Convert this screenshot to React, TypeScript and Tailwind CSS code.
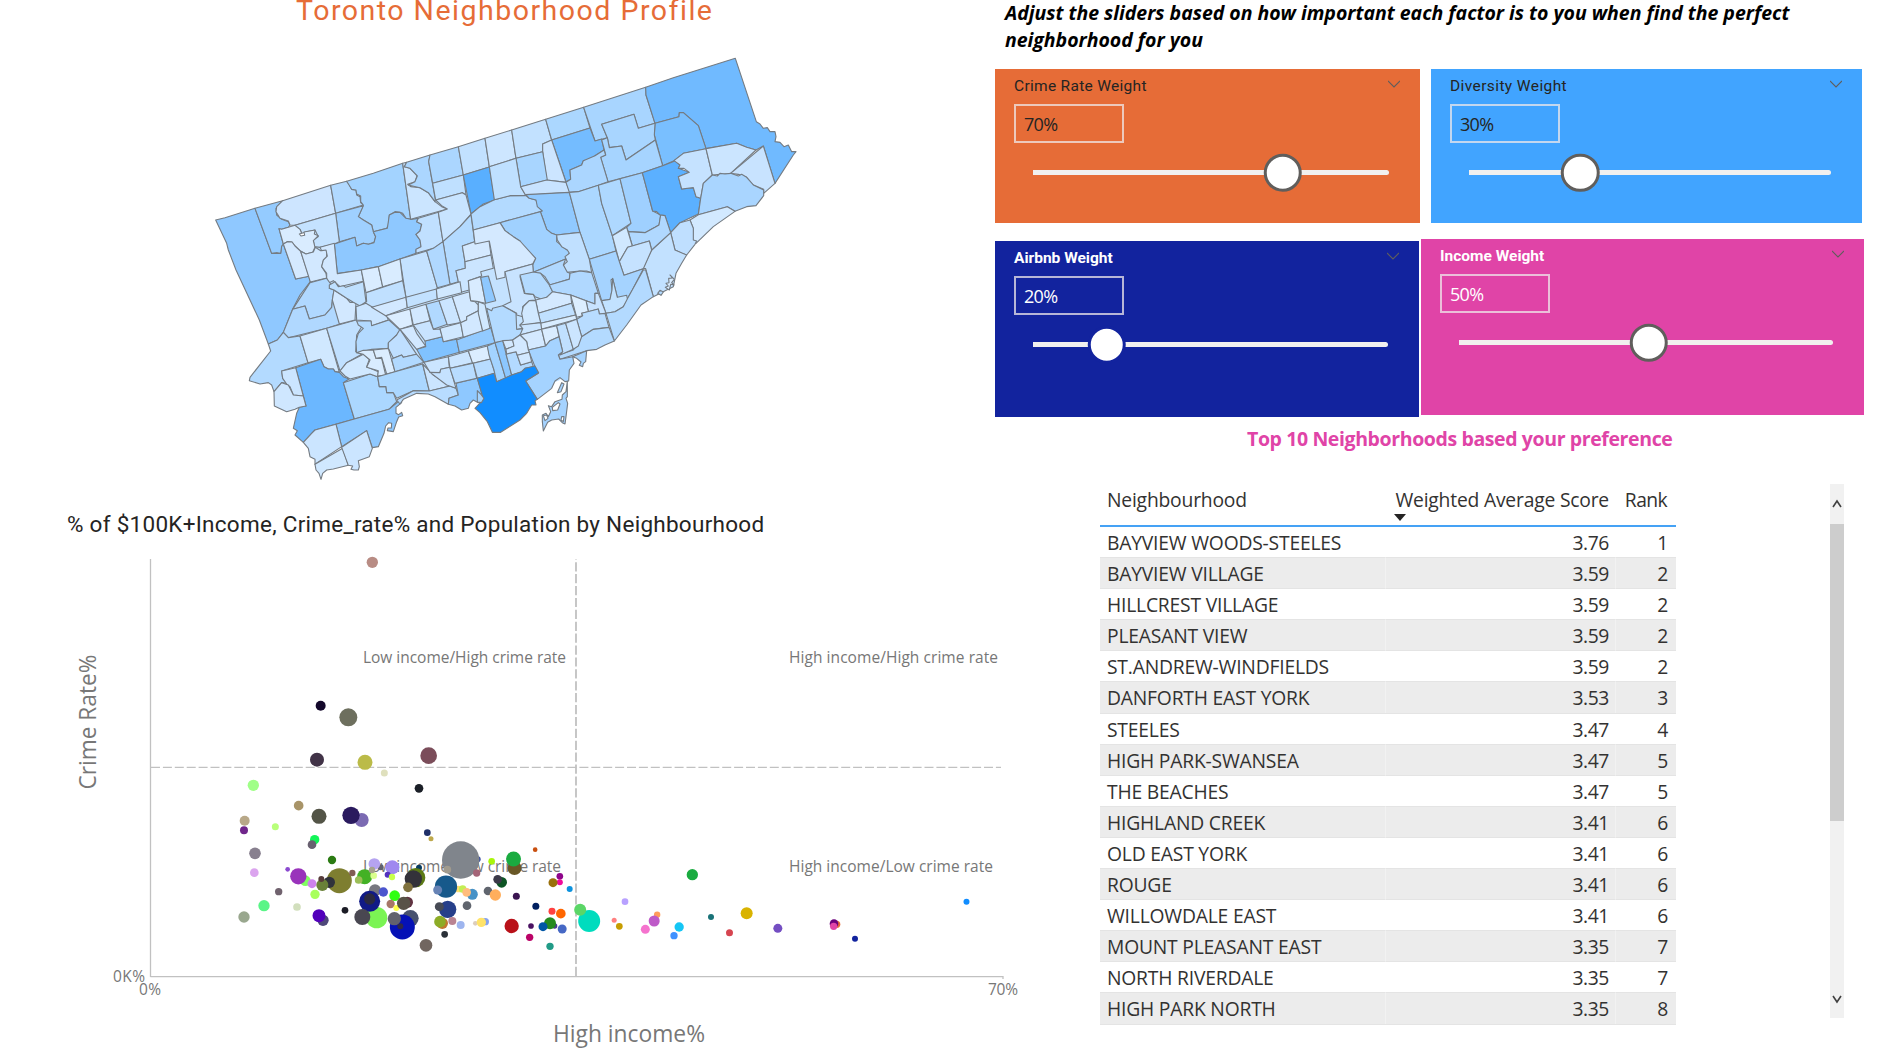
import React from "react";

const W = "font-['Open_Sans','Noto_Sans',sans-serif]";
const DIN = "font-['Roboto','Liberation_Sans',sans-serif]";

type Area = [string, string];

const northWest: Area[] = [
  ["#8fc8ff", "47,540 75,533 165,505 215,640 242,640 245,618 250,612 287,717 327,709 331,725 300,765 278,807 250,877 232,900 205,912 178,840 108,690 85,630 80,610"],
  ["#94cbff", "165,505 248,482 228,505 230,525 245,538 265,545 270,555 265,562 245,568 237,566 250,612 245,618 242,640 232,638 215,640"],
  ["#cde5ff", "248,482 392,436 407,520 285,556 270,555 265,543 240,535 228,515 230,500"],
  ["#b1d9ff", "392,436 440,424 447,432 455,448 468,450 470,465 480,470 482,488 490,495 407,520"],
  ["#a3d3ff", "440,424 520,400 608,370 632,538 618,535 608,520 600,517 585,515 568,525 565,555 560,565 520,575 515,555 490,540 475,530 490,495 482,485 482,468 470,462 468,450 455,448"],
  ["#9fd0ff", "407,520 490,497 475,530 490,540 515,555 520,575 527,590 522,607 505,613 490,610 470,618 465,592 418,605"],
  ["#8ec8ff", "403,612 465,592 470,618 490,610 505,613 522,608 527,590 520,575 562,565 568,525 585,517 600,517 618,535 632,538 655,535 650,545 665,553 660,573 648,583 660,600 663,620 648,630 648,640 600,657 535,680 484,690 412,701"],
  ["#c4e2ff", "285,556 407,520 418,605 403,612 360,622 343,620 340,600 355,590 345,570 320,575 305,580 300,568"],
  ["#d9ecff", "237,566 245,568 270,560 285,556 300,568 305,580 298,582 303,588 314,586 312,576 345,570 343,582 355,587 340,602 345,622 338,637 318,642 300,632 285,618 276,606 262,605 250,612"],
  ["#d4e9ff", "250,612 262,605 276,606 285,618 302,634 327,709 287,717"],
  ["#d2e8ff", "302,634 318,642 340,636 346,622 362,632 380,628 380,655 370,662 365,680 378,700 380,714 331,726"],
  ["#d2e8ff", "360,622 403,610 412,701 484,690 490,724 440,735 420,740 400,722 380,732 380,700 365,680 370,660 382,648 378,630 365,632"],
  ["#cbe5ff", "608,370 620,367 613,380 630,385 652,405 645,425 623,433 632,440 660,443 685,458 705,485 725,500 742,507 632,538"],
  ["#abd6ff", "620,367 690,345 686,365 706,478 705,485 685,458 660,443 625,435 645,425 652,408 630,385 613,380"],
  ["#abd6ff", "690,345 775,320 790,405 698,430 686,365"],
  ["#c2e1ff", "775,320 855,295 868,381 790,405"],
  ["#bfe0ff", "698,430 790,405 798,465 787,458 707,480"],
  ["#59afff", "790,405 868,381 884,480 850,492 813,522"],
  ["#c0e0ff", "655,535 715,517 729,605 700,625 648,640 648,628 663,620 660,600 648,583 660,573 665,553 650,545"],
  ["#c8e4ff", "715,517 742,507 725,497 707,480 787,458 798,465 813,522 780,560 729,605"],
  ["#b3daff", "729,605 780,560 813,524 824,605 787,618 795,665 796,685 768,692 775,725 750,733"],
  ["#c4e2ff", "600,657 680,633 712,743 709,750 618,773"],
  ["#b0d8ff", "680,633 700,625 729,605 750,733 712,743"],
  ["#d9ecff", "484,690 535,680 548,740 498,758"],
  ["#d9ecff", "535,680 600,657 608,722 548,740"],
  ["#c0e0ff", "498,758 608,722 618,773 515,803 485,795 500,785"],
  ["#d4e9ff", "787,618 824,605 867,602 873,645 795,665"],
  ["#cbe5ff", "795,665 873,645 880,685 842,695 845,708 805,722 808,750 783,757 775,725 768,692 796,685"],
];

const northEast: Area[] = [
  ["#b3daff", "-27,522 0,500 43,479 90,467 137,466 148,475 168,480 175,500 187,513 60,548 -20,570"],
  ["#cde6ff", "15,295 95,270 108,355 28,380"],
  ["#c2e1ff", "95,270 197,238 215,300 188,312 188,335 108,355"],
  ["#abd7ff", "197,238 311,202 330,264 215,300"],
  ["#a8d5ff", "311,202 497,142 498,165 525,250 475,265 462,223 365,253 382,293 345,303"],
  ["#70baff", "497,142 580,113 766,55 829,245 840,252 850,265 862,263 870,275 885,275 888,290 885,305 900,307 912,320 925,315 935,335 948,335 940,345 885,430 850,318 828,330 800,322 770,310 678,326 655,257 610,218 598,218 597,230 525,250 498,165"],
  ["#79bfff", "525,250 597,230 598,218 610,218 655,257 678,326 610,340 582,362 548,377 523,285"],
  ["#74bcff", "215,300 330,264 345,303 365,297 372,330 345,347 330,360 310,362 305,375 270,390 272,418 258,425"],
  ["#cce5ff", "188,312 215,300 258,427 200,420 188,335"],
  ["#a8d5ff", "108,355 188,335 202,420 122,440"],
  ["#bfe0ff", "28,380 108,355 122,440 137,466 90,467 43,479"],
  ["#c8e3ff", "122,440 200,420 258,427 270,457 137,466"],
  ["#a8d5ff", "365,253 462,223 475,265 525,250 523,285 526,300 438,360 425,318 388,323 382,293"],
  ["#a6d4ff", "382,293 388,323 425,318 438,360 526,300 548,377 487,398 384,425 362,352 377,345 372,325 365,300"],
  ["#abd6ff", "258,427 272,418 270,390 305,375 310,362 345,347 372,330 377,345 362,352 384,425 355,436 295,455 268,457"],
  ["#90c9ff", "137,464 268,457 300,577 230,585 215,580 200,568 190,540 181,515 187,513 172,500 168,480 148,475"],
  ["#a0d1ff", "60,548 181,515 190,540 200,568 215,580 230,585 230,605 262,630 270,635 257,657 160,697 158,675 167,655 135,625 120,603 100,590 75,572"],
  ["#d4e9ff", "-20,570 60,548 75,572 100,590 120,603 167,655 158,672 75,695 75,712 50,718 28,603 -15,612"],
  ["#abd7ff", "268,457 295,455 355,436 365,490 397,587 408,633 328,658 300,577"],
  ["#aed8ff", "355,436 420,416 453,550 397,587 365,490"],
  ["#9fd0ff", "420,416 487,398 518,513 542,525 537,555 525,562 495,578 445,575 440,562 453,550"],
  ["#5bb0ff", "487,398 548,377 587,362 600,375 595,385 628,397 595,410 605,447 640,443 648,470 662,475 655,522 600,548 572,578 555,527 540,525 530,515 518,513"],
  ["#c5e2ff", "582,362 610,340 678,326 697,405 670,430 662,475 648,470 640,443 605,447 595,410 628,397 612,385 595,385 600,375"],
  ["#cbe5ff", "678,326 770,310 800,322 828,330 752,400 697,405"],
  ["#c8e3ff", "752,400 850,318 885,430 851,460 851,448 820,435 800,412 775,403"],
  ["#a9d5ff", "697,405 712,408 720,400 735,402 752,400 775,408 785,403 800,412 820,435 851,450 851,467 828,497 800,500 765,514 742,500 655,524 662,475 670,430"],
  ["#d2e9ff", "742,500 765,514 700,560 648,610 638,600 640,565 630,540 655,524"],
  ["#bfdfff", "572,578 600,548 630,540 640,565 640,600 650,603 645,613 620,645 605,640 585,630"],
  ["#c2e1ff", "515,630 572,578 585,630 620,645 605,670 588,700 580,740 560,750 520,770 497,686 488,686"],
  ["#b0d8ff", "445,575 495,578 525,562 537,555 542,525 555,527 572,578 515,630 508,603 457,618"],
  ["#d0e8ff", "397,587 440,562 457,618 443,622 418,665"],
  ["#c5e2ff", "418,665 443,622 508,603 515,630 490,686 432,706"],
  ["#a5d3ff", "328,658 408,633 418,665 432,706 490,686 457,750 443,775 412,772 398,716 393,720 396,750 390,780 365,782"],
  ["#c0e0ff", "230,585 300,577 328,658 335,698 320,693 300,693 260,697 250,675 262,665 255,650 268,640 262,630 245,620 232,600"],
  ["#b0d8ff", "160,697 257,657 250,675 262,697 270,700 268,717 210,735 195,710 182,700"],
  ["#c8e3ff", "75,695 158,672 160,697 120,710 133,760 160,763 167,780 148,782 128,800 128,830 110,825 110,820 68,797 93,785"],
];

const southWest: Area[] = [
  ["#b0d8ff", "330,38 380,25 392,42 388,55 402,60 397,90 395,112 375,135 328,147 315,108 278,118"],
  ["#b0d8ff", "278,118 315,108 328,147 375,135 395,112 398,85 420,162 380,175 265,203 250,187"],
  ["#b3daff", "205,222 232,210 250,187 265,203 300,198 324,278 245,303 248,325 262,340 245,338 222,365 215,345 205,338 180,342 148,332 150,322 212,243"],
  ["#d0e8ff", "300,198 380,175 418,307 405,305 400,297 385,297 372,290 362,268 324,278"],
  ["#c0e0ff", "380,175 468,150 485,170 470,195 467,245 485,253 440,278 420,303"],
  ["#d2e8ff", "402,60 440,85 450,97 468,97 465,150 418,162 397,90"],
  ["#bfe0ff", "388,45 405,35 415,50 430,47 437,52 490,35 498,95 480,108 460,97 440,85 402,60 388,55"],
  ["#cbe5ff", "468,110 498,100 560,137 565,150 515,167 513,153 470,150"],
  ["#b3daff", "470,153 513,153 515,167 567,150 600,180 590,195 565,220 565,235 515,238 470,248 468,215 475,190 490,175 475,165"],
  ["#bfdfff", "600,178 650,253 610,262 605,255 580,265 565,235 565,218 590,195"],
  ["#6bb7ff", "287,293 362,268 372,290 385,297 400,297 405,305 418,307 430,320 447,327 430,338 463,447 345,480 335,490 310,517 285,495 292,482 280,475 290,430 298,412 318,408"],
  ["#cbe5ff", "245,303 287,293 310,378 280,375 270,350 262,345 248,325"],
  ["#cfe7ff", "222,365 245,338 265,345 270,355 280,375 310,378 318,408 298,412 285,418 260,425 223,408"],
  ["#abd7ff", "430,338 510,312 533,320 538,350 558,350 560,368 580,368 590,395 567,418 463,447"],
  ["#8ec8ff", "408,463 463,447 567,418 600,390 605,398 588,412 588,430 596,434 605,427 608,437 596,441 590,455 580,485 562,482 564,474 574,474 575,460 566,458 557,468 552,490 535,530 517,533 500,482 425,530"],
  ["#cbe5ff", "345,480 408,463 425,530 345,583 345,568 330,560 325,535 310,517 335,490"],
  ["#d0e8ff", "345,583 428,535 445,586 400,597 380,600 368,610 363,628 357,610 348,600"],
  ["#cbe5ff", "425,532 500,482 517,535 508,560 475,572 478,590 475,600 462,600 453,598 458,588 445,586"],
  ["#d0e8ff", "420,303 440,278 490,253 508,268 500,290 535,305 533,320 510,312 450,327 435,318"],
  ["#d9ecff", "470,248 490,241 520,240 528,265 545,265 557,315 533,318 535,302 500,292 510,270 490,253"],
  ["#dbedff", "520,240 565,235 585,305 560,312 545,262 528,265"],
  ["#b1d9ff", "580,265 605,255 610,262 650,253 672,277 585,305 575,268"],
  ["#abd7ff", "533,320 585,305 668,282 688,363 640,362 590,385 580,368 560,368 558,350 538,350"],
  ["#cbe5ff", "668,282 700,315 750,348 688,363"],
  ["#b8dcff", "590,390 640,362 688,363 750,348 768,355 775,375 747,385 745,403 705,380 685,372 650,370 610,388 600,402"],
  ["#8ec8ff", "768,340 832,325 850,385 835,398 820,390 810,400 805,415 785,420 765,408 745,403 747,385 775,375"],
  ["#80c2ff", "650,238 677,230 675,213 727,200 730,215 770,208 778,247 672,277"],
  ["#92caff", "770,210 872,172 885,218 778,247"],
  ["#d2e8ff", "515,112 618,82 622,113 557,137"],
  ["#dbedff", "557,137 630,117 638,165 600,178"],
  ["#c2e1ff", "618,82 709,57 712,87 622,113"],
  ["#d2e8ff", "630,117 678,103 690,152 640,165"],
  ["#b1d9ff", "678,103 717,92 742,163 700,178"],
  ["#cbe5ff", "717,92 757,80 782,158 742,165"],
  ["#d2e8ff", "757,80 808,65 812,92 825,95 835,105 835,122 800,140 800,150 782,158"],
  ["#d0e8ff", "709,57 780,35 785,68 712,87"],
  ["#c8e3ff", "640,165 690,152 700,178 720,177 727,200 675,213"],
  ["#d2e8ff", "600,178 640,167 650,190 677,228 650,238"],
  ["#d0e8ff", "720,175 782,158 790,200 730,215"],
  ["#d2e8ff", "782,158 800,150 800,140 835,122 848,182 790,202"],
  ["#d8ebff", "805,32 842,20 857,100 835,95 812,92 808,65"],
  ["#8ec8ff", "842,22 865,18 887,92 857,100"],
  ["#d0e8ff", "835,95 855,103 870,175 848,183 835,130"],
  ["#cbe5ff", "672,277 745,260 748,292 722,298 720,308 690,307"],
  ["#cbe5ff", "745,260 805,243 818,278 750,295"],
  ["#dbedff", "805,243 862,228 872,267 818,280"],
  ["#c5e2ff", "690,307 720,308 722,298 750,292 768,355 740,345"],
  ["#b8dcff", "750,295 820,280 830,325 765,340"],
  ["#b8dcff", "820,280 872,267 885,310 832,325"],
];

const southEast: Area[] = [
  ["#b3daff", "120,15 160,6 182,10 208,45 218,65 200,82 185,88 165,80 160,73 135,70"],
  ["#b0d8ff", "208,45 268,28 270,10 300,3 335,8 355,70 345,70 345,102 272,75 218,65"],
  ["#c2e2ff", "365,92 390,88 396,60 398,25 412,82 440,76 443,90 430,110 405,125 378,130"],
  ["#b3daff", "443,85 490,0 497,0 520,80 483,105 440,165 403,213 378,130 405,125 430,110"],
  ["#c8e3ff", "318,92 345,102 345,70 355,70 378,130 358,132 355,117 325,125"],
  ["#dceeff", "272,75 318,92 325,125 305,130 308,137 290,142"],
  ["#b8dcff", "290,148 308,137 305,130 355,117 358,132 375,130 387,172 340,178 305,200"],
  ["#b3daff", "305,200 340,178 387,172 403,213 375,225 350,238 320,242 240,268 235,255 280,240"],
  ["#d4e9ff", "167,90 200,82 218,65 272,75 275,100 175,130"],
  ["#c0e0ff", "175,130 275,100 287,135 182,160"],
  ["#d8ecff", "182,160 287,135 290,148 183,178"],
  ["#d0e8ff", "120,165 130,155 125,130 130,110 148,92 167,92 175,130 182,158 120,168"],
  ["#cbe5ff", "120,165 182,158 185,178 120,195 115,178 128,176"],
  ["#b3daff", "20,115 35,122 38,115 68,107 108,130 110,178 128,176 120,195 98,210 45,218"],
  ["#d4e9ff", "120,195 185,178 197,228 145,240 140,215"],
  ["#d9ecff", "185,178 230,167 237,200 210,212 197,228"],
  ["#c0e0ff", "230,167 257,160 280,238 240,255 248,245"],
  ["#cbe5ff", "257,160 290,148 305,200 295,228 280,238"],
  ["#a5d3ff", "145,240 197,228 210,212 237,200 248,245 235,255 240,268 278,260 282,280 268,300 266,333 255,335 240,323 225,333 215,355 172,388 137,333 175,310 165,290"],
  ["#a3d3ff", "22,228 45,218 77,325 50,335 42,300 27,255"],
  ["#8cc7ff", "45,218 68,212 95,315 77,325"],
  ["#d2e8ff", "68,212 98,210 102,228 78,238"],
  ["#b3daff", "78,252 108,245 122,285 155,275 160,290 135,295 125,305 95,315"],
  ["#d2e8ff", "78,238 102,228 98,210 120,195 140,215 145,240 148,247 112,256 108,245 80,252"],
  ["#d2e8ff", "112,256 148,247 155,275 122,285"],
  ["#118dff", "-8,325 42,310 50,335 95,315 125,305 135,295 165,288 176,308 137,333 172,388 165,392 168,405 155,405 140,430 120,450 62,487 37,487 22,455 0,428 -15,415 10,388"],
  ["#a3d3ff", "-8,362 2,372 12,385 4,398 -8,396"],
  ["#a5d3ff", "278,260 320,242 317,275 310,280 308,290 298,286 303,276 290,265"],
  ["#a5d3ff", "262,333 262,380 258,385 263,400 258,440 255,462 247,458 236,447 215,450 203,457 190,483 187,455 187,435 198,430 205,440 212,425 205,407 215,410 225,395 246,388 247,375 258,365"],
  ["#ffffff", "217,412 235,398 240,402 233,420 218,422"],
  ["#ffffff", "190,437 200,435 204,445 195,452"],
  ["#ffffff", "245,440 252,440 250,455 243,450"],
  ["#a5d3ff", "245,338 252,342 243,365 232,368"],
  ["#d9ecff", "565,48 558,40 567,38 566,25 577,24 570,15 583,28 575,38 582,45 572,43 568,60 556,52"],
  ["#b3daff", "533,70 540,61 550,66 543,76"],
];

const quadrants: { at: string; areas: Area[] }[] = [
  { at: "translate(200 40) scale(0.33333)", areas: northWest },
  { at: "translate(480 40) scale(0.33333)", areas: northEast },
  { at: "translate(200 270) scale(0.33333)", areas: southWest },
  { at: "translate(480 270) scale(0.33333)", areas: southEast },
];

function TorontoMap() {
  return (
    <svg viewBox="200 40 610 450" className="ml-[200px] block h-[450px] w-[610px] shrink-0">
      <path fill="#c4e2ff" d="M290 250L330 220L420 190L500 170L600 240L620 290L600 320L560 380L510 400L480 380L400 380L310 390L290 350Z" />
      {quadrants.map((q) => (
        <g key={q.at} transform={q.at} stroke="#747b82" strokeWidth={3.3} strokeLinejoin="round">
          {q.areas.map(([fill, points], i) => (
            <polygon key={i} fill={fill} points={points} />
          ))}
        </g>
      ))}
    </svg>
  );
}

type Dot = [number, number, number, string];

const upperDots: Dot[] = [
  [967, 217, 17, "#b88c84"], [812, 647, 15, "#13082b"], [895, 682, 27, "#6d6f5e"], [801, 809, 21, "#413347"],
  [945, 817, 22.5, "#bbbb48"], [1136, 797, 25, "#7b4d5a"], [1003, 849, 10.5, "#dfe0bd"], [1107, 895, 13, "#1b1f27"],
];

const leftDots: Dot[] = [
  [100, 16, 17, "#a0ff88"], [236, 77, 14.5, "#a89468"], [297, 109, 22.5, "#535447"], [425, 120, 21, "#7b6ab2"], [393, 106, 26, "#2a1a5e"],
  [74, 122, 15, "#b8a888"], [72, 151, 12, "#70268b"], [166, 140, 10.5, "#b8ff7a"], [284, 179, 14, "#12f558"], [276, 194, 13, "#686070"],
  [105, 220, 17.5, "#88808f"], [336, 240, 12.5, "#2b7b13"], [622, 158, 10, "#1f2f68"], [633, 176, 7.5, "#bea84c"], [103, 278, 13, "#dba4ee"],
  [203, 268, 7, "#8b4ad0"], [256, 302, 16, "#80ff60"], [235, 289, 24.5, "#9933bb"], [276, 311, 13.5, "#ce82ed"], [358, 302, 37.5, "#7e7e30"],
  [328, 307, 17, "#30323b"], [307, 315, 18, "#698038"], [304, 297, 9, "#573c3b"], [397, 279, 9.5, "#815c53"], [176, 335, 11, "#70626e"],
  [285, 343, 14, "#a8ff5c"], [132, 377, 17, "#5af587"], [231, 381, 11.5, "#d2dfbd"], [72, 411, 17, "#99a78e"], [309, 421, 17, "#4e4779"],
  [297, 407, 19.5, "#5200bb"], [375, 391, 10, "#1b1c25"], [482, 262, 9, "#60606e"], [463, 252, 17.5, "#b5a3f0"], [434, 290, 22.5, "#43b125"],
  [461, 287, 10, "#d9ff8d"], [456, 270, 9.5, "#a6a38d"], [416, 300, 11.5, "#9bbe57"], [517, 262, 21, "#9f88ef"], [503, 284, 9, "#5231bd"],
  [516, 291, 9.5, "#c7ff4d"], [597, 263, 9, "#073b60"], [587, 293, 29, "#5c7a16"], [580, 297, 26, "#33323a"], [564, 322, 14.5, "#80723e"],
  [465, 331, 18, "#77777f"], [490, 336, 14, "#4b55ce"], [458, 389, 19, "#45218b"], [470, 413, 32, "#7bf454"], [449, 364, 31.5, "#111a86"],
  [449, 357, 17, "#2b2a40"], [427, 411, 24, "#494751"], [524, 347, 16, "#30ff12"], [512, 372, 12.5, "#a77768"], [529, 384, 9, "#ffff4c"],
  [562, 367, 17, "#613241"], [551, 370, 20, "#585247"], [571, 415, 25, "#48526f"], [547, 441, 37.5, "#0511b6"], [523, 416, 20, "#62616d"], [541, 439, 9, "#302849"],
  [618, 496, 19, "#716660"], [773, 238, 9, "#3b50a0"], [722, 240, 56, "#80858c"], [682, 269, 11.5, "#a19b8e"], [770, 279, 11, "#a46477"],
  [815, 244, 10, "#a9f60b"], [715, 327, 10, "#ffde72"], [678, 320, 33.5, "#17598b"], [653, 330, 13.5, "#6783b5"], [728, 327, 11.5, "#c3ee54"],
  [757, 343, 16.5, "#4792c7"], [740, 337, 13, "#ffbd7e"], [845, 307, 16, "#0d5424"], [833, 298, 13, "#3b3949"], [804, 333, 13, "#60656e"],
  [826, 345, 17, "#ffae5c"], [889, 349, 10.5, "#3b1551"], [741, 377, 13, "#60656e"], [683, 388, 26, "#263f8a"], [658, 380, 13.5, "#474b55"],
  [667, 430, 17, "#c07830"], [660, 425, 17.5, "#8dac27"], [697, 423, 12, "#b98392"], [722, 435, 12, "#9eb5ef"], [766, 430, 7, "#dccdbd"],
  [796, 425, 11, "#87a4ef"], [784, 427, 14, "#ffe36a"], [674, 463, 10, "#2a3038"], [875, 438, 21.5, "#b91119"],
];

const rightDots: Dot[] = [
  [43.6, 264, 21, "#695726"], [40.6, 237, 22.5, "#1aab40"], [105.5, 209, 7, "#c94f0f"], [179.5, 289, 10, "#8e058b"], [179.5, 307, 9, "#f00a9b"],
  [159, 308, 13.5, "#99700a"], [209, 327, 9, "#0b92de"], [577, 284, 17, "#1aab40"], [375, 365, 10, "#b8a1ff"], [107.5, 379, 10.5, "#002060"],
  [156, 394, 10.5, "#ff4141"], [182.5, 401, 14.5, "#ff6600"], [93, 438, 8.5, "#4a1162"], [164, 438, 8, "#4a3a92"], [150, 430, 18, "#258a1f"],
  [129, 440, 13.5, "#0056a5"], [186.5, 447, 13.5, "#4668c5"], [89, 472, 11, "#bb0367"], [150, 499, 11, "#219b87"], [267.5, 423, 33, "#00dcbe"],
  [240.5, 389, 18, "#5bd667"], [342.5, 421, 7.5, "#ff8080"], [358, 439, 10, "#c79d00"], [471.5, 404, 9.5, "#ff9d5c"], [462.5, 423, 16.5, "#be5ac8"],
  [436, 448, 13.5, "#f573ce"], [537.5, 441, 14, "#15c6f5"], [522, 467, 11, "#4092ff"], [633, 411, 9, "#197278"], [688.5, 458, 10.5, "#d64550"],
  [740, 400, 18, "#d9b300"], [833.5, 445, 13.5, "#744ec2"], [1010, 433, 11, "#e66c37"], [1002, 431, 13, "#6b007b"], [1001, 439, 11, "#e044a7"],
  [1065, 476, 9, "#12239e"], [1399.5, 365, 9, "#118dff"],
];

function Dots({ at, items }: { at: string; items: Dot[] }) {
  return (
    <g transform={at}>
      {items.map(([x, y, r, c], i) => (
        <circle key={i} cx={x} cy={y} r={r} fill={c} />
      ))}
    </g>
  );
}

function ScatterChart() {
  return (
    <svg viewBox="0 548 995 506" className={`${W} block h-[506px] w-full shrink-0 overflow-visible`} fill="#777777">
      <g stroke="#c1c1c1" fill="none">
        <path strokeWidth={1.3} d="M150.5 559V977M150.5 976.7H1003V979" />
        <path strokeWidth={1.4} strokeDasharray="9 2.9" d="M151 767.4H1001" />
        <path strokeWidth={1.8} strokeDasharray="9.2 2.7" d="M576 976V559" />
      </g>
      <g fontSize={15.5}>
        <text x={363} y={663} textLength={203}>Low income/High crime rate</text>
        <text x={789} y={663} textLength={209}>High income/High crime rate</text>
        <text x={363} y={872} textLength={198}>Low income/Low crime rate</text>
        <text x={789} y={872} textLength={204}>High income/Low crime rate</text>
        <text x={113} y={982} textLength={32}>0K%</text>
        <text x={139} y={995} textLength={22}>0%</text>
        <text x={988} y={995} textLength={30}>70%</text>
      </g>
      <g fontSize={24}>
        <text x={553} y={1042} textLength={152} lengthAdjust="spacingAndGlyphs">High income%</text>
        <text transform="translate(96 789.5) rotate(-90)" textLength={135} lengthAdjust="spacingAndGlyphs">Crime Rate%</text>
      </g>
      <Dots at="translate(50 490) scale(0.33333)" items={upperDots} />
      <Dots at="translate(220 780) scale(0.33333)" items={leftDots} />
      <Dots at="translate(500 780) scale(0.33333)" items={rightDots} />
    </svg>
  );
}

interface WeightProps {
  title: string;
  value: string;
  box: string;
  label: string;
  number: string;
  knob: string;
  left: number;
}

function WeightCard({ title, value, box, label, number, knob, left }: WeightProps) {
  return (
    <section className={`${box} flex shrink-0 flex-col`}>
      <div className="flex h-[34px] items-start justify-between pt-[7px] pr-5 pl-[19px]">
        <h3 className={`${DIN} ${label} text-[15.5px] leading-5`}>{title}</h3>
        <svg className="mt-[4px] h-2 w-3" viewBox="0 0 12 8" fill="none" stroke="#605e5c" strokeWidth={1.1}>
          <path d="M0 1L6 7L12 1" />
        </svg>
      </div>
      <div className={`${W} ${number} ml-[19px] mt-[1px] flex h-[39px] w-[110px] items-center border-2 border-[#efe8ea]/75 pt-[2px] pl-[8px] text-[18px] tracking-[-0.7px]`}>
        {value}
      </div>
      <div className="relative mt-[27px] mr-[31px] ml-[38px] h-[5px] rounded-r-full bg-[#f1f0ef]">
        <div className={`${knob} absolute top-1/2 size-[38.5px] -translate-x-1/2 -translate-y-1/2 rounded-full border-[3px] bg-white`} style={{ left }} />
      </div>
    </section>
  );
}

const rows: [string, string, number][] = [
  ["BAYVIEW WOODS-STEELES", "3.76", 1], ["BAYVIEW VILLAGE", "3.59", 2], ["HILLCREST VILLAGE", "3.59", 2], ["PLEASANT VIEW", "3.59", 2],
  ["ST.ANDREW-WINDFIELDS", "3.59", 2], ["DANFORTH EAST YORK", "3.53", 3], ["STEELES", "3.47", 4], ["HIGH PARK-SWANSEA", "3.47", 5],
  ["THE BEACHES", "3.47", 5], ["HIGHLAND CREEK", "3.41", 6], ["OLD EAST YORK", "3.41", 6], ["ROUGE", "3.41", 6],
  ["WILLOWDALE EAST", "3.41", 6], ["MOUNT PLEASANT EAST", "3.35", 7], ["NORTH RIVERDALE", "3.35", 7], ["HIGH PARK NORTH", "3.35", 8],
];

const grid = "grid grid-cols-[286px_230px_60px]";

function RankTable() {
  return (
    <div className={`${W} w-[576px] text-[#333231]`}>
      <div className={`${grid} h-[43px] border-b-2 border-[#45a2f5] text-[19.3px] leading-[31px] tracking-[-0.2px]`}>
        <div className="pl-[7px]">Neighbourhood</div>
        <div className="relative pr-[7px] text-right whitespace-nowrap">
          Weighted Average Score
          <svg className="absolute top-[30px] left-2 h-[7px] w-3" viewBox="0 0 12 7"><path d="M0 0H12L6 7Z" fill="#252423" /></svg>
        </div>
        <div className="pr-[9px] text-right tracking-[-0.6px]">Rank</div>
      </div>
      {rows.map(([name, score, rank], i) => (
        <div key={name} className={`${grid} h-[31.1px] border-b border-[#e4e4e4] text-[19.3px] leading-[31px] tracking-[-0.2px] ${i % 2 ? "bg-[#ececec]" : "bg-white"}`}>
          <div className="border-r border-white/30 pl-[7px] whitespace-nowrap">{name}</div>
          <div className="border-r border-white/30 pr-[6px] text-right tracking-[-0.4px]">{score}</div>
          <div className="pr-[8px] text-right">{rank}</div>
        </div>
      ))}
    </div>
  );
}

function Scrollbar() {
  return (
    <div className="flex h-[534px] w-[14px] flex-col bg-[#f1f1f1]">
      <svg className="h-10 w-[14px] shrink-0" viewBox="0 0 14 40" fill="none" stroke="#404040" strokeWidth={1.6}><path d="M3 23L7 17L11 23" /></svg>
      <div className="h-[297px] bg-[#cdcdcd]" />
      <svg className="mt-auto h-10 w-[14px] shrink-0" viewBox="0 0 14 40" fill="none" stroke="#404040" strokeWidth={1.6}><path d="M3 18L7 24L11 18" /></svg>
    </div>
  );
}

export default function App() {
  return (
    <main className="flex h-[1054px] w-[1889px] overflow-hidden bg-white">
      <div className="flex w-[995px] shrink-0 flex-col">
        <h1 className={`${DIN} -mt-[7px] h-[47px] pl-[296px] text-[28.5px] leading-9 tracking-[1.5px] whitespace-nowrap text-[#e66c37]`}>Toronto Neighborhood Profile</h1>
        <TorontoMap />
        <h2 className={`${DIN} h-[58px] pt-[18px] pl-[67px] text-[22.5px] leading-8 tracking-[0.27px] whitespace-nowrap text-[#252423]`}>% of $100K+Income, Crime_rate% and Population by Neighbourhood</h2>
        <ScatterChart />
      </div>
      <div className="flex w-[894px] shrink-0 flex-col">
        <p className={`${W} -mt-px h-[70px] pl-[10px] text-[19.5px] leading-[27px] font-bold tracking-[-0.03px] whitespace-nowrap text-black italic`}>
          Adjust the sliders based on how important each factor is to you when find the perfect<br />neighborhood for you
        </p>
        <div className="flex gap-[11px]">
          <WeightCard title="Crime Rate Weight" value="70%" left={249.5} box="h-[154px] w-[425px] bg-[#e66c37]" label="text-[#252423] tracking-[0.3px]" number="text-[#252423]" knob="border-[#605e5c]" />
          <WeightCard title="Diversity Weight" value="30%" left={111} box="h-[154px] w-[431px] bg-[#41a4ff]" label="text-[#252423] tracking-[0.4px]" number="text-[#252423]" knob="border-[#605e5c]" />
        </div>
        <div className="mt-4 flex h-[178px] gap-[2px]">
          <WeightCard title="Airbnb Weight" value="20%" left={73.5} box="mt-[2px] h-[176px] w-[424px] bg-[#12239e]" label="text-white font-bold" number="text-white" knob="border-[#12239e]" />
          <WeightCard title="Income Weight" value="50%" left={189.5} box="h-[176px] w-[443px] bg-[#e044a7]" label="text-white font-bold" number="text-white" knob="border-[#605e5c]" />
        </div>
        <h2 className={`${W} mt-[6px] h-[61px] pl-[252px] text-[19.5px] leading-8 font-bold tracking-[-0.39px] whitespace-nowrap text-[#e044a7]`}>Top 10 Neighborhoods based your preference</h2>
        <div className="flex pl-[105px]">
          <RankTable />
          <div className="ml-[154px]"><Scrollbar /></div>
        </div>
      </div>
    </main>
  );
}
